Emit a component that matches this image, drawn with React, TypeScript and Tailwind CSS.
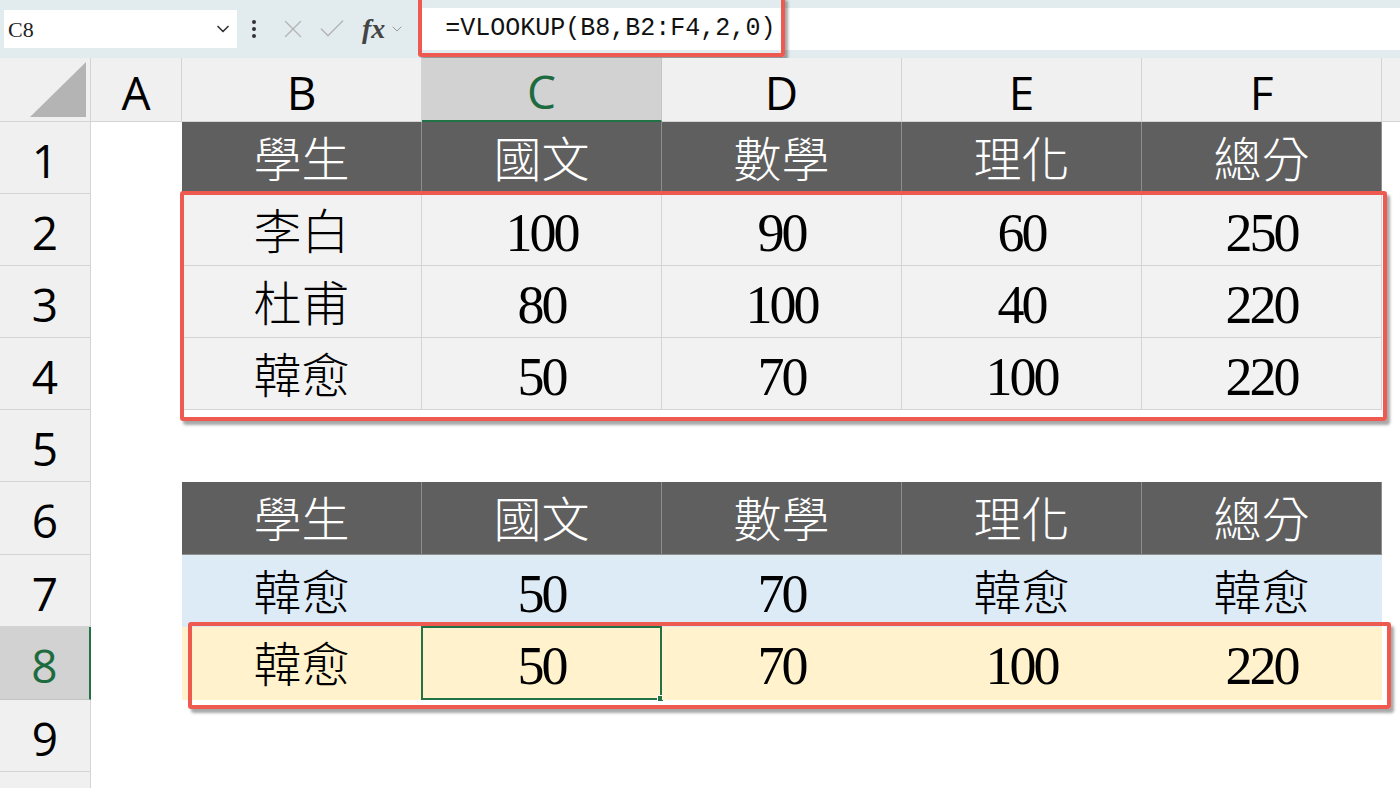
import { ChevronDown, X, Check } from "lucide-react";

const cellFont = "[font-family:'Liberation_Serif','Noto_Sans_CJK_TC',serif]";

const cols = ["A", "B", "C", "D", "E", "F"];

type Row = { n: number; kind: "head" | "gray" | "blue" | "yellow" | "empty"; cells?: string[] };

const rows: Row[] = [
  { n: 1, kind: "head", cells: ["學生", "國文", "數學", "理化", "總分"] },
  { n: 2, kind: "gray", cells: ["李白", "100", "90", "60", "250"] },
  { n: 3, kind: "gray", cells: ["杜甫", "80", "100", "40", "220"] },
  { n: 4, kind: "gray", cells: ["韓愈", "50", "70", "100", "220"] },
  { n: 5, kind: "empty" },
  { n: 6, kind: "head", cells: ["學生", "國文", "數學", "理化", "總分"] },
  { n: 7, kind: "blue", cells: ["韓愈", "50", "70", "韓愈", "韓愈"] },
  { n: 8, kind: "yellow", cells: ["韓愈", "50", "70", "100", "220"] },
  { n: 9, kind: "empty" },
  { n: 10, kind: "empty" },
];

const fill: Record<string, string> = {
  head: "bg-[#5f5f5f] text-white border-[#8e8e8e]",
  gray: "bg-[#f2f2f2] text-black border-[#d4d4d4]",
  blue: "bg-[#ddebf7] text-black border-[#ddebf7]",
  yellow: "bg-[#fff2cc] text-black border-[#fff2cc]",
};

function Cell({ text, kind, active }: { text: string; kind: string; active?: boolean }) {
  const isNum = /^\d+$/.test(text);
  return (
    <div
      className={`relative flex items-center justify-center border-r border-b pt-[6px] ${fill[kind]} ${cellFont} ${
        isNum ? "text-[54px] tracking-[-3px]" : "text-[48px] font-light"
      } leading-none`}
    >
      {text}
      {active && (
        <div className="absolute -inset-px border-2 border-[#217346]">
          <div className="absolute -right-[4px] -bottom-[4px] h-[7px] w-[7px] border border-white bg-[#217346]" />
        </div>
      )}
    </div>
  );
}

function FormulaBar() {
  return (
    <div className="relative flex h-[58px] items-center bg-[#e2ecee] pl-[4px]">
      <div className="flex h-[38px] w-[233px] items-center justify-between bg-white pl-[4px] pr-[4px]">
        <span className="text-[22px] text-[#222] [font-family:'Liberation_Serif',serif]">C8</span>
        <ChevronDown size={20} strokeWidth={2} className="text-[#333]" />
      </div>
      <div className="ml-[15px] flex flex-col gap-[3px]">
        <div className="h-[4px] w-[4px] rounded-full bg-[#333]" />
        <div className="h-[4px] w-[4px] rounded-full bg-[#333]" />
        <div className="h-[4px] w-[4px] rounded-full bg-[#333]" />
      </div>
      <X size={30} strokeWidth={1.1} className="ml-[22px] text-[#b5b5b5]" />
      <Check size={32} strokeWidth={1.1} className="ml-[8px] text-[#b5b5b5]" />
      <span className="ml-[14px] text-[28px] font-bold italic text-[#444] [font-family:'Liberation_Serif',serif]">fx</span>
      <ChevronDown size={16} strokeWidth={1.5} className="ml-[4px] text-[#999]" />
      <div className="ml-[14px] flex h-[42px] flex-1 items-center bg-white pl-[26px]">
        <span className="text-[25px] text-[#111] [font-family:'Liberation_Mono',monospace]">=VLOOKUP(B8,B2:F4,2,0)</span>
      </div>
      <div className="absolute left-[418px] top-[-4px] h-[61px] w-[367px] rounded-[3px] border-[4px] border-[#ef5a50] shadow-[3px_4px_3px_rgba(0,0,0,0.35)]" />
    </div>
  );
}

export default function App() {
  return (
    <div className="h-[788px] w-[1400px] overflow-hidden bg-white">
      <FormulaBar />
      <div className="relative">
        <div className="grid grid-cols-[91px_91px_240px_240px_240px_240px_240px_1fr] grid-rows-[64px_72px_72px_72px_72px_72px_73px_72px_73px_72px_72px]">
          {/* corner */}
          <div className="flex items-end justify-end border-r border-b border-[#d4d4d4] bg-[#f0f0f0] p-[4px]">
            <div className="h-[55px] w-[56px] bg-[#b4b4b4] [clip-path:polygon(100%_0,100%_100%,0_100%)]" />
          </div>
          {cols.map((c) => (
            <div
              key={c}
              className={`flex items-center justify-center pt-[4px] text-[46px] leading-none [font-family:'Open_Sans',sans-serif] ${
                c === "C"
                  ? "border-r border-b-2 border-r-[#c4c4c4] border-b-[#217346] bg-[#d2d2d2] text-[#1e6b3f]"
                  : "border-r border-b border-[#d4d4d4] bg-[#f0f0f0] text-black"
              }`}
            >
              {c}
            </div>
          ))}
          <div className="border-b border-[#d4d4d4] bg-[#f0f0f0]" />

          {rows.map((r) => (
            <div key={r.n} className="contents">
              <div
                className={`flex items-center justify-center pt-[4px] text-[46px] leading-none [font-family:'Open_Sans',sans-serif] ${
                  r.n === 8
                    ? "border-r-2 border-b border-r-[#217346] border-b-[#c4c4c4] bg-[#d2d2d2] text-[#1e6b3f]"
                    : "border-r border-b border-[#d4d4d4] bg-[#f0f0f0] text-black"
                }`}
              >
                {r.n < 10 ? r.n : ""}
              </div>
              <div className="bg-white" />
              {r.cells
                ? r.cells.map((t, i) => (
                    <Cell key={i} text={t} kind={r.kind} active={r.n === 8 && i === 1} />
                  ))
                : [0, 1, 2, 3, 4].map((i) => <div key={i} className="bg-white" />)}
              <div className="bg-white" />
            </div>
          ))}
        </div>

        {/* highlight boxes */}
        <div className="absolute left-[180px] top-[133px] h-[230px] w-[1207px] rounded-[3px] border-[4px] border-[#ef5a50] shadow-[3px_4px_3px_rgba(0,0,0,0.35)]" />
        <div className="absolute left-[188px] top-[564px] h-[87px] w-[1203px] rounded-[3px] border-[4px] border-[#ef5a50] shadow-[3px_4px_3px_rgba(0,0,0,0.35)]" />
      </div>
    </div>
  );
}
